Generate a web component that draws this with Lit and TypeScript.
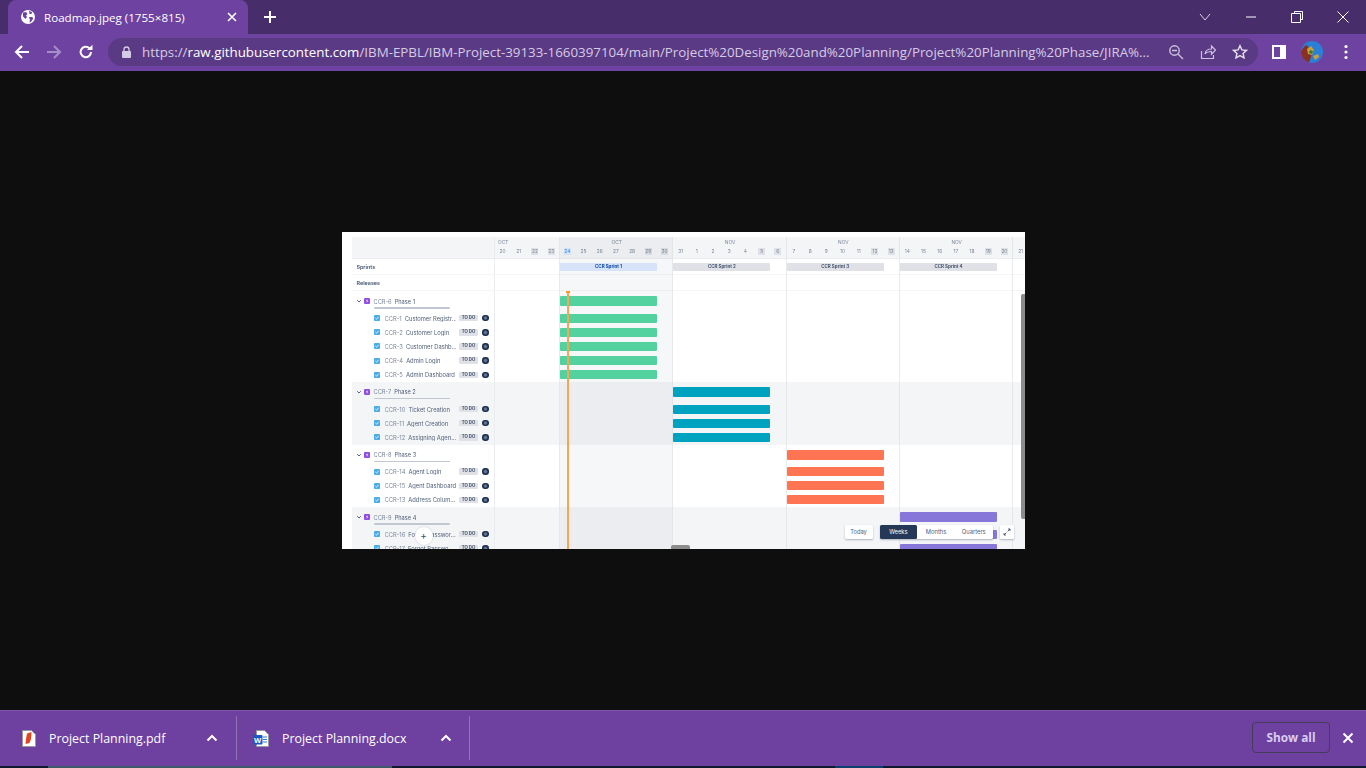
import { LitElement, html, css, svg } from 'lit';
import { customElement } from 'lit/decorators.js';

type Task = { key: string; name: string };
type Phase = { key: string; name: string; week: number; color: string; tasks: Task[]; shaded: boolean };

const PHASES: Phase[] = [
  {
    key: 'CCR-6', name: 'Phase 1', week: 2, color: '#57d9a3', shaded: false,
    tasks: [
      { key: 'CCR-1', name: 'Customer Registr...' },
      { key: 'CCR-2', name: 'Customer Login' },
      { key: 'CCR-3', name: 'Customer Dashb...' },
      { key: 'CCR-4', name: 'Admin Login' },
      { key: 'CCR-5', name: 'Admin Dashboard' },
    ],
  },
  {
    key: 'CCR-7', name: 'Phase 2', week: 3, color: '#00a3bf', shaded: true,
    tasks: [
      { key: 'CCR-10', name: 'Ticket Creation' },
      { key: 'CCR-11', name: 'Agent Creation' },
      { key: 'CCR-12', name: 'Assigning Agen...' },
    ],
  },
  {
    key: 'CCR-8', name: 'Phase 3', week: 4, color: '#ff7452', shaded: false,
    tasks: [
      { key: 'CCR-14', name: 'Agent Login' },
      { key: 'CCR-15', name: 'Agent Dashboard' },
      { key: 'CCR-13', name: 'Address Colum...' },
    ],
  },
  {
    key: 'CCR-9', name: 'Phase 4', week: 5, color: '#8777d9', shaded: true,
    tasks: [
      { key: 'CCR-16', name: 'Forgot Passwor...' },
      { key: 'CCR-17', name: 'Forgot Passwo' },
    ],
  },
];

const DAYS = [
  20, 21, 22, 23, 24, 25, 26, 27, 28, 29, 30, 31, 1, 2, 3, 4, 5, 6, 7, 8, 9, 10, 11, 12, 13, 14, 15, 16, 17, 18, 19, 20, 21,
];
const WEEKEND = new Set([2, 3, 9, 10, 16, 17, 23, 24, 30, 31]);
const SPRINTS = ['CCR Sprint 1', 'CCR Sprint 2', 'CCR Sprint 3', 'CCR Sprint 4'];

const globe = svg`<circle cx="8" cy="8" r="7" fill="#fff"/><path d="M3 3.5 6 3 7.5 5 6 6.5 7 8 5.5 10 3 7.5zM9 2 12 3 11.5 5 9.5 5zM9 8h3.5l.5 2-2.5 3.5L9.5 13 10 11z" fill="#6e42a1"/>`;

@customElement('road-map')
export class RoadMap extends LitElement {
  static styles = css`
    :host {
      display: block;
      position: relative;
      width: 683px;
      height: 317px;
      background: #fff;
      overflow: hidden;
      font-family: Inter, 'Noto Sans', sans-serif;
      color: #42526e;
    }
    .sheet {
      position: relative;
      padding: 5px 0 0 10px;
      filter: blur(0.4px);
    }
    .row {
      display: flex;
    }
    .left {
      flex: none;
      width: 143px;
      box-sizing: border-box;
      display: flex;
      align-items: center;
      border-right: 1px solid #ebecf0;
    }
    .track {
      flex: none;
      display: grid;
      grid-template-columns: 65.5px repeat(5, 113.33px);
      width: 632px;
    }
    .head {
      height: 22px;
      background: #f4f5f7;
      border-bottom: 1px solid #ebecf0;
      box-sizing: border-box;
    }
    .head .track {
      display: block;
    }
    .months {
      display: grid;
      grid-template-columns: 65.5px repeat(4, 113.33px);
      height: 11px;
      font-size: 4.8px;
      line-height: 11px;
      color: #7a869a;
      text-align: center;
    }
    .months span:first-child {
      text-align: left;
      padding-left: 3.5px;
    }
    .nums {
      display: grid;
      grid-template-columns: repeat(33, 16.19px);
      font-size: 4.8px;
      line-height: 7px;
      color: #7a869a;
      text-align: center;
    }
    .nums b {
      font-weight: 400;
      justify-self: center;
      width: 7px;
    }
    .nums b.off {
      background: #dfe1e6;
    }
    .nums b.now {
      color: #2684ff;
      background: #deebff;
    }
    .meta {
      height: 16px;
      box-sizing: border-box;
      border-bottom: 1px solid #f4f5f7;
    }
    .meta .left {
      padding-left: 5px;
      font-size: 5.4px;
      font-weight: 600;
      color: #42526e;
    }
    .pill {
      align-self: center;
      height: 8px;
      width: 97px;
      border-radius: 1px;
      background: #dfe1e6;
      color: #42526e;
      font-size: 4.5px;
      font-weight: 700;
      line-height: 8px;
      text-align: center;
    }
    .pill.current {
      background: #deebff;
      color: #0747a6;
    }
    .pill:first-child {
      grid-column: 2;
    }
    .group.shaded {
      background: #f4f5f7;
    }
    .phase {
      height: 20px;
    }
    .task {
      height: 14.2px;
    }
    .phase .left {
      position: relative;
      padding-left: 4px;
      font-size: 5.7px;
    }
    .chev {
      width: 6px;
      height: 6px;
      margin-right: 2px;
    }
    .epic {
      width: 6px;
      height: 6px;
      margin-right: 4px;
    }
    .key {
      flex: none;
      color: #7a869a;
      margin-right: 3px;
      white-space: nowrap;
    }
    .name {
      color: #505f79;
      white-space: nowrap;
    }
    .progress {
      position: absolute;
      left: 22px;
      bottom: 2.5px;
      width: 76px;
      height: 1.5px;
      background: #c1c7d0;
      border-radius: 1px;
    }
    .task .left {
      padding-left: 22.5px;
      font-size: 5.8px;
    }
    .check {
      flex: none;
      width: 6px;
      height: 6px;
      margin-right: 4.5px;
    }
    .label {
      flex: 1;
      min-width: 0;
      display: flex;
      overflow: hidden;
    }
    .lozenge {
      flex: none;
      width: 19px;
      height: 6.5px;
      margin: 0 4px 0 3px;
      background: #dfe1e6;
      border-radius: 1px;
      color: #42526e;
      font-size: 4.3px;
      font-weight: 700;
      line-height: 6.5px;
      text-align: center;
    }
    .avatar {
      flex: none;
      width: 6.5px;
      height: 6.5px;
      margin-right: 5px;
      border-radius: 50%;
      background: radial-gradient(circle, #66758f 0 22%, #172b4d 50%);
    }
    .bar {
      align-self: center;
      width: 97px;
      border-radius: 1px;
    }
    .phase .bar {
      height: 10px;
    }
    .task .bar {
      height: 9px;
    }
    /* week lines, shaded current week and today marker lie over the rows */
    .lines {
      position: absolute;
      inset: 5px 0 0 153px;
      display: grid;
      grid-template-columns: 65.5px repeat(5, 113.33px);
      pointer-events: none;
    }
    .lines div {
      border-right: 1px solid rgba(223, 225, 230, 0.7);
    }
    .lines .cur {
      background: rgba(9, 30, 66, 0.035);
    }
    .now-line {
      position: absolute;
      left: 225px;
      top: 59px;
      bottom: 0;
      width: 2px;
      background: #f9a650;
    }
    .now-line::before {
      content: '';
      position: absolute;
      left: -1px;
      top: 0;
      width: 4px;
      height: 1.5px;
      background: #ff991f;
    }
    .vbar {
      position: absolute;
      right: 0;
      top: 62px;
      width: 4px;
      height: 225px;
      background: #8c8c8c;
      border-radius: 2px 0 0 2px;
    }
    .hbar {
      position: absolute;
      left: 329px;
      bottom: 0;
      width: 19px;
      height: 4px;
      background: #8c8c8c;
      border-radius: 2px 2px 0 0;
    }
    .add {
      position: absolute;
      left: 73px;
      top: 295px;
      width: 18px;
      height: 18px;
      border-radius: 50%;
      background: #fff;
      color: #42526e;
      font-size: 10px;
      line-height: 17px;
      text-align: center;
      box-shadow: 0 0 2px rgba(9, 30, 66, 0.2);
    }
    .controls {
      position: absolute;
      left: 503px;
      top: 293px;
      display: flex;
      gap: 7px;
      font-size: 5.8px;
      line-height: 14px;
      color: #505f79;
      text-align: center;
    }
    .btn {
      background: #fff;
      border-radius: 1.5px;
      box-shadow: 0 1px 2px rgba(9, 30, 66, 0.3);
    }
    .today-btn {
      width: 28px;
    }
    .scale {
      display: flex;
    }
    .scale span {
      width: 37.7px;
    }
    .scale .on {
      background: #253858;
      color: #fff;
      border-radius: 1.5px;
    }
    .expand {
      width: 14px;
      display: flex;
      align-items: center;
      justify-content: center;
    }
  `;

  renderPhase(p: Phase) {
    const bar = html`<div class="bar" style="grid-column:${p.week};background:${p.color}"></div>`;
    return html`
      <div class="group ${p.shaded ? 'shaded' : ''}">
        <div class="row phase">
          <div class="left">
            <svg class="chev" viewBox="0 0 6 6"><path d="M1.2 2.2 3 4l1.800-1.800" fill="none" stroke="#42526e" stroke-width="0.9"/></svg>
            <svg class="epic" viewBox="0 0 6 6"><rect width="6" height="6" rx="1" fill="#904ee2"/><path d="M3.4 1 1.9 3.3h1.2L2.7 5l1.5-2.4H3.1z" fill="#fff"/></svg>
            <span class="key">${p.key}</span><span class="name">${p.name}</span>
            <i class="progress"></i>
          </div>
          <div class="track">${bar}</div>
        </div>
        ${p.tasks.map(
          (t) => html`
            <div class="row task">
              <div class="left">
                <svg class="check" viewBox="0 0 6 6"><rect width="6" height="6" rx="0.8" fill="#4bade8"/><path d="M1.4 3 2.6 4.2 4.6 1.8" fill="none" stroke="#fff" stroke-width="0.8"/></svg>
                <div class="label"><span class="key">${t.key}</span><span class="name">${t.name}</span></div>
                <span class="lozenge">TO DO</span>
                <i class="avatar"></i>
              </div>
              <div class="track">${bar}</div>
            </div>
          `
        )}
      </div>
    `;
  }

  render() {
    return html`
      <div class="sheet">
        <div class="row head">
          <div class="left"></div>
          <div class="track">
            <div class="months"><span>OCT</span><span>OCT</span><span>NOV</span><span>NOV</span><span>NOV</span></div>
            <div class="nums">
              ${DAYS.map(
                (d, i) => html`<b class="${i === 4 ? 'now' : WEEKEND.has(i) ? 'off' : ''}">${d}</b>`
              )}
            </div>
          </div>
        </div>
        <div class="row meta">
          <div class="left">Sprints</div>
          <div class="track">
            ${SPRINTS.map((s, i) => html`<div class="pill ${i === 0 ? 'current' : ''}">${s}</div>`)}
          </div>
        </div>
        <div class="row meta">
          <div class="left">Releases</div>
          <div class="track"></div>
        </div>
        ${PHASES.map((p) => this.renderPhase(p))}
        <div class="lines"><div></div><div class="cur"></div><div></div><div></div><div></div><div></div></div>
      </div>
      <div class="now-line"></div>
      <div class="vbar"></div>
      <div class="hbar"></div>
      <div class="add">+</div>
      <div class="controls">
        <div class="btn today-btn">Today</div>
        <div class="btn scale"><span class="on">Weeks</span><span>Months</span><span>Quarters</span></div>
        <div class="btn expand">
          <svg width="8" height="8" viewBox="0 0 8 8"><path d="M4.6 3.4 7 1M5 1h2v2M3.4 4.6 1 7M1 5v2h2" fill="none" stroke="#42526e" stroke-width="0.9"/></svg>
        </div>
      </div>
    `;
  }
}

@customElement('app-root')
export class AppRoot extends LitElement {
  static styles = css`
    :host {
      display: flex;
      flex-direction: column;
      width: 1366px;
      height: 768px;
      overflow: hidden;
      background: #0e0e0e;
      font-family: 'Open Sans', 'Noto Sans', sans-serif;
      color: #fff;
    }
    svg {
      display: block;
      flex: none;
    }
    .strip {
      flex: none;
      height: 34px;
      background: #472d69;
      display: flex;
      position: relative;
    }
    .tab {
      margin-left: 8px;
      width: 240px;
      box-sizing: border-box;
      background: #6e42a1;
      border-radius: 8px 8px 0 0;
      display: flex;
      align-items: center;
      padding: 0 11px 0 12px;
      gap: 8px;
      font-size: 11.6px;
    }
    .tab span {
      flex: 1;
      white-space: nowrap;
    }
    .newtab {
      margin: 0 0 0 16px;
      align-self: center;
    }
    .winctl {
      margin-left: auto;
      display: flex;
      align-items: center;
      gap: 34px;
      padding-right: 17px;
    }
    .toolbar {
      flex: none;
      height: 37px;
      box-sizing: border-box;
      padding-bottom: 1px;
      background: #6e42a1;
      display: flex;
      align-items: center;
    }
    .nav {
      display: flex;
      align-items: center;
      gap: 16px;
      padding-left: 14px;
      width: 108px;
      box-sizing: border-box;
    }
    .omni {
      width: 1150px;
      height: 28px;
      box-sizing: border-box;
      border-radius: 14px;
      background: #5a3a85;
      display: flex;
      align-items: center;
      padding-left: 13px;
      font-size: 13.33px;
      color: #d6cbe4;
    }
    .url {
      margin-left: 10px;
      width: 1010px;
      white-space: nowrap;
      overflow: hidden;
    }
    .url b {
      font-weight: 400;
      color: #fff;
    }
    .omni-icons {
      display: flex;
      gap: 16px;
      margin-left: 16px;
    }
    .actions {
      display: flex;
      align-items: center;
      margin-left: 14px;
    }
    .viewer {
      flex: 1;
      min-height: 0;
      display: flex;
      align-items: center;
      justify-content: center;
    }
    .shelf {
      flex: none;
      height: 56px;
      background: #6e40a0;
      border-top: 1px solid #7d55ab;
      box-sizing: border-box;
      padding-bottom: 1px;
      display: flex;
      align-items: center;
      font-size: 12.4px;
    }
    .dl {
      height: 44px;
      display: flex;
      align-items: center;
      border-right: 1px solid #9273b8;
      box-sizing: border-box;
    }
    .dl span {
      white-space: nowrap;
    }
    .showall {
      margin: 0 0 2px auto;
      width: 78px;
      height: 31px;
      box-sizing: border-box;
      border: 1px solid #453c5c;
      border-radius: 4px;
      font-size: 11.8px;
      font-weight: 700;
      line-height: 29px;
      text-align: center;
      color: #d8ccef;
    }
    .shelf-close {
      margin: 0 12px;
    }
    .taskbar {
      flex: none;
      height: 2px;
      background: #0d1a2e;
      display: flex;
    }
    .taskbar i {
      display: block;
      height: 2px;
    }
    .task-a {
      margin-left: 48px;
      width: 344px;
      background: #3e5a6a;
    }
    .task-b {
      margin-left: 443px;
      width: 48px;
      background: #0a3f6e;
    }
  `;

  render() {
    return html`
      <div class="strip">
        <div class="tab">
          <svg width="16" height="16" viewBox="0 0 16 16">${globe}</svg>
          <span>Roadmap.jpeg (1755×815)</span>
          <svg width="10" height="10" viewBox="0 0 10 10"><path d="M1 1l8 8M9 1 1 9" stroke="#fff" stroke-width="1.6"/></svg>
        </div>
        <svg class="newtab" width="12" height="12" viewBox="0 0 12 12"><path d="M6 0v12M0 6h12" stroke="#fff" stroke-width="2"/></svg>
        <div class="winctl">
          <svg width="12" height="8" viewBox="0 0 12 8"><path d="M1 1l5 6 5-6" fill="none" stroke="#d9d0e6" stroke-width="1"/></svg>
          <svg width="12" height="2" viewBox="0 0 12 2"><path d="M1 1h10" stroke="#fff" stroke-width="1"/></svg>
          <svg width="12" height="12" viewBox="0 0 12 12"><path d="M3.5 2.5v-2h8v8h-2M.5 2.5h9v9h-9z" fill="none" stroke="#fff" stroke-width="1"/></svg>
          <svg width="12" height="12" viewBox="0 0 12 12"><path d="M.5.5l11 11M11.5.5l-11 11" stroke="#fff" stroke-width="1"/></svg>
        </div>
      </div>
      <div class="toolbar">
        <div class="nav">
          <svg width="16" height="16" viewBox="0 0 16 16"><path d="M15 8H2M8 2 2 8l6 6" fill="none" stroke="#fff" stroke-width="2"/></svg>
          <svg width="16" height="16" viewBox="0 0 16 16"><path d="M1 8h13M8 2l6 6-6 6" fill="none" stroke="#a58ec6" stroke-width="2"/></svg>
          <svg width="16" height="16" viewBox="0 0 16 16"><path d="M13 8a5.2 5.2 0 1 1-1.6-3.8" fill="none" stroke="#fff" stroke-width="2"/><path d="M9 6h5.5V.8z" fill="#fff"/></svg>
        </div>
        <div class="omni">
          <svg width="11" height="12" viewBox="0 0 11 12"><rect x="1" y="5" width="9" height="7" rx="1" fill="#d6cbe4"/><path d="M3 5V3.5a2.5 2.5 0 0 1 5 0V5" fill="none" stroke="#d6cbe4" stroke-width="1.3"/></svg>
          <div class="url">https://<b>raw.githubusercontent.com</b>/IBM-EPBL/IBM-Project-39133-1660397104/main/Project%20Design%20and%20Planning/Project%20Planning%20Phase/JIRA%...</div>
          <div class="omni-icons">
            <svg width="16" height="16" viewBox="0 0 16 16"><circle cx="6.5" cy="6.5" r="4.7" fill="none" stroke="#cdc2dd" stroke-width="1.4"/><path d="M10 10l5 5M4 6.5h5" stroke="#cdc2dd" stroke-width="1.4"/></svg>
            <svg width="16" height="16" viewBox="0 0 16 16"><path d="M1.5 7v7.5h12V11M5 10c.5-3.500 3-5 6.500-5V2l4 4.200-4 4V7.500C8.500 7.500 6.500 8 5 10z" fill="none" stroke="#cdc2dd" stroke-width="1.2"/></svg>
            <svg width="16" height="16" viewBox="0 0 16 16"><path d="M8 1.800l1.900 4.100 4.500.5-3.300 3 .9 4.400L8 11.600l-4 2.200.9-4.400-3.300-3 4.500-.5z" fill="none" stroke="#e3dcec" stroke-width="1.500"/></svg>
          </div>
        </div>
        <div class="actions">
          <svg width="14" height="14" viewBox="0 0 14 14"><rect x="1" y="1" width="12" height="12" fill="none" stroke="#fff" stroke-width="2"/><rect x="8" y="1" width="5" height="12" fill="#fff"/></svg>
          <svg style="margin-left:15px" width="22" height="22" viewBox="0 0 22 22"><circle cx="11" cy="11" r="11" fill="#2a7fd6"/><path d="M0 11a11 11 0 0 0 8 10.500L11 13 6 4A11 11 0 0 0 0 11z" fill="#8a2f22"/><path d="M6 8l4-3 3 4-2 5-4-1zM12 15l5-2 1 3-4 3z" fill="#c9a13a"/><path d="M9 9l3 1-1 3-3-1z" fill="#2f7d3e"/></svg>
          <svg style="margin-left:21px" width="4" height="16" viewBox="0 0 4 16"><circle cx="2" cy="2.500" r="1.600" fill="#fff"/><circle cx="2" cy="8" r="1.600" fill="#fff"/><circle cx="2" cy="13.500" r="1.600" fill="#fff"/></svg>
        </div>
      </div>
      <div class="viewer"><road-map></road-map></div>
      <div class="shelf">
        <div class="dl" style="width:237px;padding-left:22px">
          <svg width="14" height="17" viewBox="0 0 14 17"><path d="M.5.500h9l4 4v12H.5z" fill="#fff" stroke="#9a9a9a"/><path d="M5 3.500 9.500 2 9 9 7.500 13 3.500 14 4 9z" fill="#e8431f"/></svg>
          <span style="margin-left:13px;width:157px">Project Planning.pdf</span>
          <svg width="12" height="8" viewBox="0 0 12 8"><path d="M1.500 6.500 6 2l4.500 4.500" fill="none" stroke="#fff" stroke-width="2"/></svg>
        </div>
        <div class="dl" style="width:233px;padding-left:16px">
          <svg width="16" height="17" viewBox="0 0 16 17"><path d="M3.500.500h8l4 4v12h-12z" fill="#fff" stroke="#9a9a9a"/><path d="M10 7h4M10 9.500h4M10 12h4" stroke="#2b7cd3" stroke-width="1.200"/><rect y="5" width="9.500" height="9.500" rx="1" fill="#185abd"/><text x="4.700" y="12.500" font-size="7.500" font-weight="700" fill="#fff" text-anchor="middle">W</text></svg>
          <span style="margin-left:13px;width:158px">Project Planning.docx</span>
          <svg width="12" height="8" viewBox="0 0 12 8"><path d="M1.500 6.500 6 2l4.500 4.500" fill="none" stroke="#fff" stroke-width="2"/></svg>
        </div>
        <div class="showall">Show all</div>
        <svg class="shelf-close" width="12" height="12" viewBox="0 0 12 12"><path d="M1.500 1.500l9 9M10.500 1.500l-9 9" stroke="#fff" stroke-width="2"/></svg>
      </div>
      <div class="taskbar"><i class="task-a"></i><i class="task-b"></i></div>
    `;
  }
}
